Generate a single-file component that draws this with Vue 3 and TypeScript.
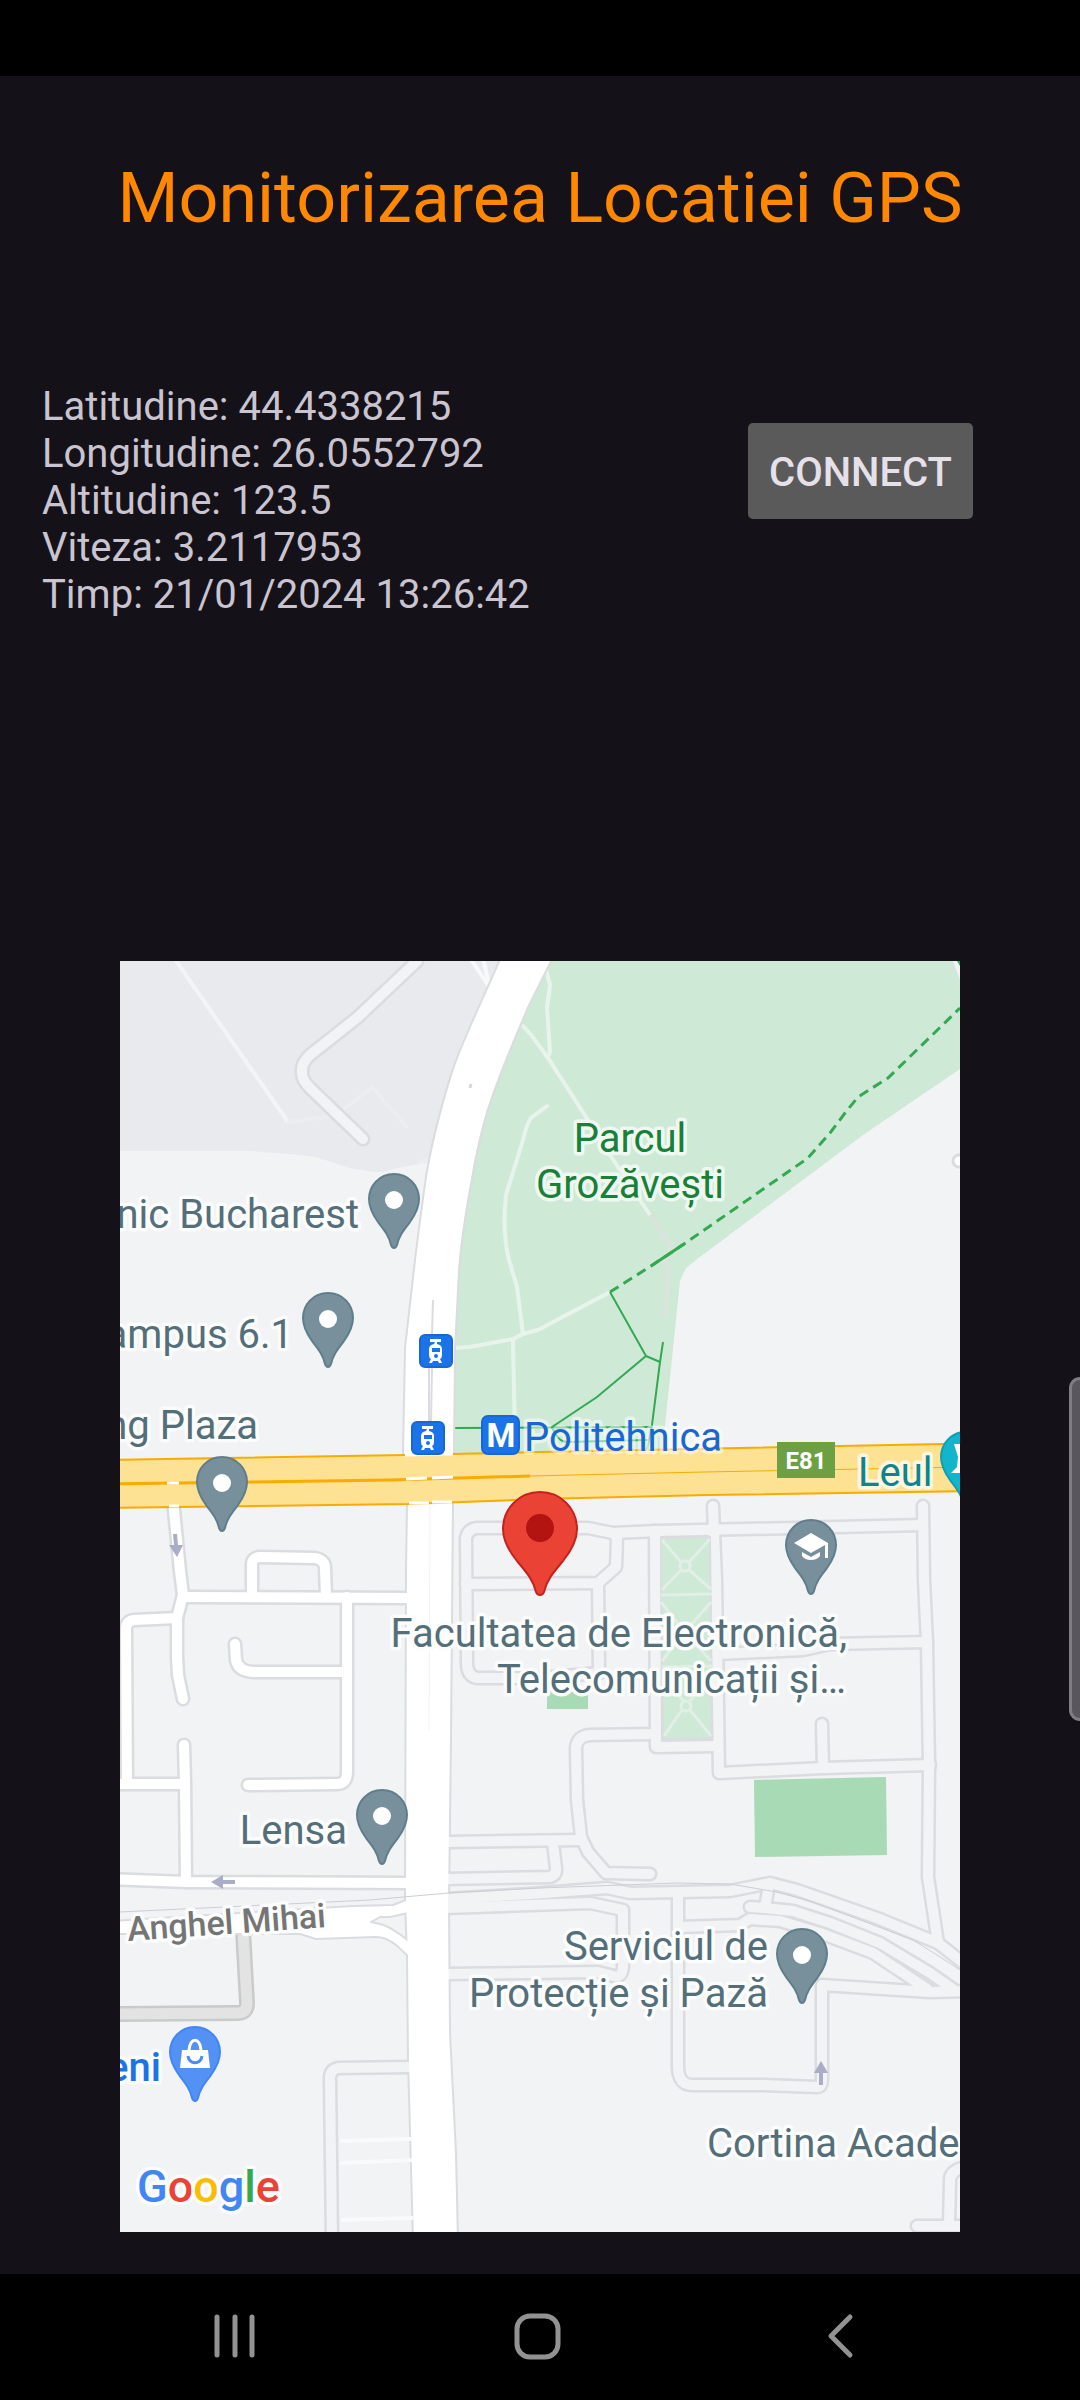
<script setup lang="ts">
interface Pin {
  x: number
  y: number
  kind: 'place' | 'school' | 'shop' | 'tower'
}

interface Label {
  text: string
  x: number
  y: number
  anchor: 'start' | 'middle' | 'end'
  tone: string
}

const readings: string[] = [
  'Latitudine: 44.4338215',
  'Longitudine: 26.0552792',
  'Altitudine: 123.5',
  'Viteza: 3.2117953',
  'Timp: 21/01/2024 13:26:42',
]

const minorRoads: string[] = [
  'M417 961 L358 1017 L310 1055 Q301 1063 302 1073 Q302 1080 310 1088 L363 1139',
  'M600 1673 L540 1678 H477 Q467 1676 467 1663 L466 1538 Q468 1529 477 1528 H588 L613 1533 L657 1531 L923 1525',
  'M466 1584 L598 1583 L616 1567 L617 1538 L613 1533',
  'M598 1583 L599 1670',
  'M655 1531 L656 1747 L717 1746',
  'M655 1734 L590 1735 Q577 1736 576 1748 L577 1800 L581 1837 L588 1852 L606 1873 L650 1874',
  'M713 1506 L716 1580 L718 1703 L719 1773 L823 1768 L930 1765',
  'M822 1724 L823 1768',
  'M923 1506 L924 1580 L927 1643 L929 1767 L928 1877 L933 1910 L938 1943',
  'M927 1642 L830 1644 L803 1650 L718 1654',
  'M446 1842 L580 1840',
  'M446 1879 L550 1877 Q557 1875 556 1868 L553 1843',
  'M446 1899 L530 1894 L607 1888 L630 1893 L730 1891 L770 1883 L797 1890 L877 1918 L938 1943 L966 1965',
  'M768 1890 L765 1908 L750 1907',
  'M765 1908 L793 1911 L830 1923 L880 1943 L930 1973 L953 1989',
  'M678 1927 L740 1925 L750 1919 L780 1921 L820 1933 L873 1953 L927 1989',
  'M678 1893 V2068 Q679 2085 692 2085 L763 2085 L817 2087 Q822 2087 822 2080 V1985 L930 1992 L966 1991',
  'M446 1908 L590 1903 L623 1910 V1967 Q622 1980 610 1975 L598 1972 L446 1974',
  'M412 2067 L338 2068 Q330 2070 330 2078 L332 2240',
  'M966 2167 Q949 2170 950 2182 L949 2225 M917 2226 H966',
]

const streets: string[] = [
  'M173 1500 L180 1571 L183 1595 L177 1618 V1657 L178 1675 L183 1699',
  'M183 1597 L412 1598',
  'M252 1597 V1565 Q252 1557 260 1557 L315 1558 Q325 1560 325 1568 L326 1597',
  'M177 1618 L134 1620 Q126 1621 126 1629 L127 1784',
  'M110 1784 L185 1784',
  'M184 1745 L185 1783 L186 1882',
  'M235 1644 L236 1660 Q238 1671 253 1672 L347 1672',
  'M347 1597 L347 1772 Q347 1784 337 1784 L248 1785',
  'M110 1879 L187 1882 L412 1883',
]

const boulevard =
  'M503 955 C478 1012 462 1045 453 1072 C442 1107 432 1146 427 1177 C423 1205 419 1236 416 1260 L406 1348 L404 1453 L408 1505 L407 1570 L406 1900 L408 1957 L409 2060 L414 2240 L457 2240 L455 2153 L449 2033 L448 1903 L450 1737 L452 1503 L453 1453 L454 1350 L458 1270 C461 1235 466 1205 472 1173 C477 1145 481 1130 486 1112 C498 1075 514 1038 528 1005 L553 955 Z'

const parkPaths: string[] = [
  'M523 1026 L532 1036 L548 1058 L588 1120 L610 1155 L650 1215',
  'M546 969 L550 985 L547 1008 L550 1052 L548 1057',
  'M547 1106 L531 1118 Q527 1123 523 1140 L506 1195 Q502 1232 509 1260 L517 1287 L523 1334',
  'M453 1348 L470 1347 L513 1339 L523 1334 L538 1330 L610 1292',
  'M513 1339 L515 1440',
]

const pins: Pin[] = [
  { x: 394, y: 1249, kind: 'place' },
  { x: 328, y: 1368, kind: 'place' },
  { x: 222, y: 1532, kind: 'place' },
  { x: 382, y: 1865, kind: 'place' },
  { x: 802, y: 2004, kind: 'place' },
  { x: 811, y: 1595, kind: 'school' },
  { x: 195, y: 2102, kind: 'shop' },
  { x: 966, y: 1507, kind: 'tower' },
]

const labels: Label[] = [
  { text: 'nic Bucharest', x: 359, y: 1228, anchor: 'end', tone: 'slate' },
  { text: 'ampus 6.1', x: 293, y: 1348, anchor: 'end', tone: 'slate' },
  { text: 'ng Plaza', x: 258, y: 1439, anchor: 'end', tone: 'slate' },
  { text: 'Facultatea de Electronică,', x: 847, y: 1647, anchor: 'end', tone: 'slate' },
  { text: 'Telecomunicații și…', x: 846, y: 1693, anchor: 'end', tone: 'slate' },
  { text: 'Lensa', x: 347, y: 1844, anchor: 'end', tone: 'slate' },
  { text: 'Serviciul de', x: 768, y: 1960, anchor: 'end', tone: 'slate' },
  { text: 'Protecție și Pază', x: 768, y: 2007, anchor: 'end', tone: 'slate' },
  { text: 'Cortina Acade', x: 707, y: 2157, anchor: 'start', tone: 'slate' },
  { text: 'Parcul', x: 630, y: 1152, anchor: 'middle', tone: 'park' },
  { text: 'Grozăvești', x: 630, y: 1198, anchor: 'middle', tone: 'park' },
  { text: 'Politehnica', x: 524, y: 1451, anchor: 'start', tone: 'transit' },
  { text: 'Leul', x: 858, y: 1486, anchor: 'start', tone: 'sight' },
  { text: 'eni', x: 161, y: 2081, anchor: 'end', tone: 'shopping' },
]

const tramStops = [
  { x: 419, y: 1334 },
  { x: 411, y: 1421 },
]
</script>

<template>
  <div class="screen">
    <div class="status-bar"></div>

    <main class="content">
      <h1 class="title">Monitorizarea Locatiei GPS</h1>

      <section class="info">
        <ul class="readings">
          <li v-for="line in readings" :key="line">{{ line }}</li>
        </ul>
        <button type="button" class="connect">CONNECT</button>
      </section>

      <svg class="map" viewBox="120 961 840 1271" role="img" aria-label="Map">
        <rect x="120" y="961" width="840" height="1271" fill="#f1f3f4" />
        <path
          d="M120 961 H550 L440 1160 L425 1163 Q400 1167 382 1172 Q370 1172 350 1168 L316 1157 Q305 1155 250 1151 H120 Z"
          fill="#e8eaed"
        />
        <g fill="none" stroke-linecap="round" stroke-linejoin="round" stroke-width="4">
          <path d="M174 958 L288 1122" stroke="#f3f4f6" />
          <path d="M288 1122 L328 1117 L340 1112 L372 1087 L406 1126 M420 1162 L432 1158" stroke="#ecedef" />
          <path d="M470 958 L488 985 M483 958 L489 985" stroke="#f8f9fa" />
        </g>

        <!-- Parks and lawns -->
        <path
          d="M540 961 H960 V1069 L910 1103 L863 1135 L696 1260 L686 1268 L680 1281 L662 1455 H445 L450 1270 L475 1130 Z"
          fill="#ceead6"
        />
        <path d="M547 1690 H588 V1709 H547 Z" fill="#a8dab5" />
        <path d="M754 1780 L886 1777 L887 1855 L755 1857 Z" fill="#a8dab5" />
        <g fill="none" stroke="#e8f4eb" stroke-width="4" stroke-linecap="round">
          <path v-for="d in parkPaths" :key="d" :d="d" />
        </g>
        <path
          d="M650 1215 L673 1248 L666 1260 M665 1260 L669 1268 L665 1317"
          fill="none"
          stroke="#dae4dd"
          stroke-width="4"
        />
        <g fill="none" stroke="#34a853" stroke-width="2">
          <path d="M610 1292 L646 1356 L597 1397 L552 1427 M646 1356 L660 1362 M663 1342 L660 1362 L652 1425 L647 1450" />
          <path d="M453 1428 L652 1427 M552 1427 Q558 1442 567 1442 L648 1440" />
          <path
            d="M610 1292 L651 1266 L684 1244 L808 1158 L830 1133 L845 1113 L858 1097 L888 1078 L960 1008"
            stroke-width="3"
            stroke-dasharray="10 6"
          />
          <path d="M651 1266 L684 1244" stroke-width="3" />
        </g>
        <path d="M953 961 L960 980 V961 Z" fill="#f1f3f4" />
        <path d="M957 961 H960 V966 Z" fill="#34a853" />
        <circle cx="959" cy="1161" r="6" fill="#fff" stroke="#dadce0" stroke-width="3" />

        <!-- Roads: outlines first, then surfaces -->
        <g fill="none" stroke-linejoin="round">
          <path :d="boulevard" stroke="#dadce0" stroke-width="4" />
          <g stroke="#dadce0" stroke-width="15" stroke-linecap="round">
            <path v-for="d in minorRoads" :key="d" :d="d" />
          </g>
          <g stroke="#f1f3f4" stroke-width="10" stroke-linecap="round">
            <path v-for="d in minorRoads" :key="d" :d="d" />
          </g>
          <path d="M243 1930 L247 2003 Q247 2013 238 2013 L110 2014" stroke="#c9caca" stroke-width="16" />
          <path d="M243 1930 L247 2003 Q247 2013 238 2013 L110 2014" stroke="#e3e3e3" stroke-width="11" />
          <g stroke="#dadce0" stroke-width="15" stroke-linecap="round">
            <path v-for="d in streets" :key="d" :d="d" />
          </g>
          <path
            d="M110 1921 L353 1906 L393 1905 L408 1899 V1913 L390 1917 L380 1917 L371 1922 L380 1924 Q390 1926 410 1942 V1958 L396 1945 Q386 1937 376 1937 L316 1939 L300 1934 L110 1934 Z"
            fill="#fff"
            stroke="#dadce0"
            stroke-width="2"
          />
          <g stroke="#fff" stroke-width="10" stroke-linecap="round">
            <path v-for="d in streets" :key="d" :d="d" />
          </g>
        </g>
        <path :d="boulevard" fill="#fff" />
        <path d="M471 1084 L470 1088" stroke="#d5d7e0" stroke-width="3" />
        <path d="M433 1300 L432 1334 M429 1368 V1421 M432 1368 L431 1421" fill="none" stroke="#dadce0" stroke-width="2" />
        <path d="M430 1505 L429 1730" stroke="#f1f2f3" stroke-width="1" />
        <path
          d="M120 1912 L370 1900 L448 1893 L540 1888 L677 1883 L730 1884 L777 1892 L813 1902 L913 1940 L937 1955 L960 1970"
          fill="none"
          stroke="#cdced6"
          stroke-width="1"
        />
        <path d="M340 2141 L411 2139 M340 2163 L412 2160 M341 2220 L413 2218" stroke="#f9fafb" stroke-width="4" />

        <!-- Garden between the faculty buildings -->
        <path d="M661 1538 L710 1537 L712 1738 L663 1739 Z" fill="#ceead6" stroke="#dadce0" stroke-width="2" />
        <g fill="none" stroke="#e1efe6" stroke-width="3">
          <path d="M662 1540 L681 1562 M689 1562 L710 1539 M681 1570 L662 1590 M689 1570 L711 1589 M661 1595 L712 1594" />
          <path d="M661 1602 L678 1624 M692 1624 L711 1602 M678 1640 L662 1661 M692 1640 L711 1661 M662 1667 L712 1666" />
          <path d="M663 1673 L683 1701 M690 1701 L711 1675 M682 1710 L664 1736 M690 1710 L711 1736" />
          <circle cx="685" cy="1566" r="5" />
          <circle cx="685" cy="1632" r="9" />
          <circle cx="686" cy="1706" r="5" />
        </g>

        <!-- E81 highway -->
        <path
          d="M110 1460 L406 1455 L540 1452 L943 1444 L970 1444 V1491 L707 1495 L540 1499 L408 1504 L110 1508 Z"
          fill="#fde293"
          stroke="#f9ab00"
          stroke-width="2"
        />
        <path d="M110 1484 L390 1480 L530 1476" fill="none" stroke="#f9ab00" stroke-width="3" />
        <path d="M530 1476 L704 1472 L970 1467" fill="none" stroke="#f9ab00" stroke-width="1" />
        <path
          d="M167 1483 H179 M406 1479 L427 1478 M432 1478 L453 1477 M405 1455 L453 1454 M409 1503 L429 1503 M432 1502 L452 1502"
          stroke="#fff"
          stroke-width="3"
        />
        <path d="M169 1506 H179" stroke="#fff" stroke-width="3" />

        <!-- One-way arrows -->
        <g fill="#a9adc8">
          <path d="M173 1534 H177 L178 1545 H183 L177 1557 L169 1545 H174 Z" />
          <path d="M211 1882 L223 1875 V1880 H235 V1884 H223 V1889 Z" />
          <path d="M821 2061 L828 2073 H823 V2085 H819 V2073 H814 Z" />
        </g>

        <!-- Route shield and transit badges -->
        <rect x="777" y="1442" width="58" height="36" fill="#6d9f43" />
        <text class="shield" x="806" y="1469" text-anchor="middle">E81</text>
        <g v-for="stop in tramStops" :key="stop.y" :transform="`translate(${stop.x} ${stop.y})`">
          <rect x="1" y="1" width="32" height="32" rx="5" fill="#1a73e8" stroke="#1967d2" stroke-width="2" />
          <path
            d="M11 5 H22 V8 H18 V10 Q23 11 23 15 V21 Q23 24 21 25 L23 29 H20 L19 27 H14 L13 29 H10 L12 25 Q10 24 10 21 V15 Q10 11 15 10 L16 8 H11 Z"
            fill="#fff"
          />
          <path d="M13 14 H21 V18 H13 Z" fill="#1a73e8" />
          <circle cx="17" cy="22" r="2" fill="#1a73e8" />
        </g>
        <rect x="482" y="1416" width="37" height="38" rx="6" fill="#1a73e8" stroke="#1967d2" stroke-width="2" />
        <text class="metro" x="501" y="1447" text-anchor="middle">M</text>

        <!-- Place pins -->
        <g v-for="pin in pins" :key="`${pin.x}-${pin.y}`" :transform="`translate(${pin.x} ${pin.y})`">
          <path
            :class="['pin', pin.kind]"
            d="M0 -75 C-15 -75 -25 -63 -25 -50 C-25 -41 -21 -34 -16 -27 C-9 -18 -5 -13 -3 -4 Q-2 -1 0 -1 Q2 -1 3 -4 C5 -13 9 -18 16 -27 C21 -34 25 -41 25 -50 C25 -63 15 -75 0 -75 Z"
          />
          <circle v-if="pin.kind === 'place'" cy="-49" r="9" fill="#fff" />
          <path
            v-else-if="pin.kind === 'school'"
            d="M0 -62 L17 -52 V-37 H14 V-50 L0 -42 L-17 -52 Z M-9 -43 L0 -38 L9 -43 V-39 Q6 -35 0 -35 Q-6 -35 -9 -39 Z"
            fill="#fff"
          />
          <g v-else-if="pin.kind === 'shop'">
            <path d="M-13 -52 H13 L15 -34 H-15 Z" fill="#fff" />
            <path d="M-6 -52 C-5 -65 5 -65 6 -52" fill="none" stroke="#fff" stroke-width="3" />
            <path d="M-7 -46 C-6 -37 6 -37 7 -46" fill="none" stroke="#4c8bf4" stroke-width="3" />
          </g>
          <path v-else d="M-12 -63 H12 V-59 L8 -53 L13 -34 H-15 L-9 -40 L-8 -50 Z" fill="#fff" />
        </g>

        <text
          v-for="label in labels"
          :key="label.text"
          :class="['label', label.tone]"
          :x="label.x"
          :y="label.y"
          :text-anchor="label.anchor"
        >{{ label.text }}</text>
        <text class="label street" transform="translate(128 1941) rotate(-4)">Anghel Mihai</text>

        <!-- Current location -->
        <g transform="translate(540 1596)">
          <path
            d="M0 -104 C-21 -104 -37 -87 -37 -67 C-37 -55 -31 -45 -23 -35 C-12 -22 -7 -16 -4 -4 Q-3 -1 0 -1 Q3 -1 4 -4 C7 -16 12 -22 23 -35 C31 -45 37 -55 37 -67 C37 -87 21 -104 0 -104 Z"
            fill="#ea4335"
            stroke="#c5221f"
            stroke-width="2"
          />
          <circle cy="-68" r="14" fill="#b31412" />
        </g>

        <text class="label brand" x="137" y="2202"><tspan fill="#4285f4">G</tspan><tspan fill="#ea4335">o</tspan><tspan fill="#fbbc04">o</tspan><tspan fill="#4285f4">g</tspan><tspan fill="#34a853">l</tspan><tspan fill="#ea4335">e</tspan></text>
      </svg>
    </main>

    <nav class="nav-bar">
      <button type="button" aria-label="Recents">
        <svg width="48" height="48" viewBox="0 0 48 48">
          <path d="M6 5 V43 M24 5 V43 M41 5 V43" />
        </svg>
      </button>
      <button type="button" aria-label="Home">
        <svg width="48" height="48" viewBox="0 0 48 48">
          <rect x="4" y="4" width="41" height="41" rx="13" />
        </svg>
      </button>
      <button type="button" aria-label="Back">
        <svg width="48" height="48" viewBox="0 0 48 48">
          <path d="M34 5 L15 24 L34 43" />
        </svg>
      </button>
    </nav>

    <div class="edge-handle"></div>
  </div>
</template>

<style>
body {
  margin: 0;
  background: #000;
}
</style>

<style scoped>
.screen {
  position: relative;
  display: flex;
  flex-direction: column;
  min-height: 100vh;
  overflow: hidden;
  background: #141218;
  font-family: Roboto, "Liberation Sans", sans-serif;
}

.status-bar {
  height: 76px;
  background: #000;
}

.content {
  flex: 1;
  padding: 81px 0 42px;
}

.title {
  margin: 0;
  color: #ff8800;
  font-size: 70px;
  font-weight: 400;
  line-height: 82px;
  text-align: center;
}

.info {
  display: flex;
  align-items: flex-start;
  justify-content: space-between;
  margin-top: 144px;
  padding: 0 107px 0 42px;
}

.readings {
  margin: 0;
  padding: 0;
  list-style: none;
  color: #cac4d0;
  font-size: 40px;
  line-height: 47px;
}

.connect {
  margin: 40px 0 0;
  padding: 3px 21px 0;
  height: 96px;
  border: 0;
  border-radius: 5px;
  background: #5a5a5b;
  color: #e6e0e9;
  font-family: inherit;
  font-size: 40px;
  font-weight: 500;
}

.map {
  display: block;
  width: calc(100% - 240px);
  height: auto;
  margin: 343px auto 0;
  overflow: hidden;
}

.label {
  font-size: 40px;
  paint-order: stroke;
  stroke: #fbfcfc;
  stroke-width: 7px;
  stroke-linejoin: round;
}

.slate {
  fill: #546e7a;
}

.park {
  fill: #188038;
  stroke: #eef8f1;
}

.transit {
  fill: #1967d2;
  stroke: rgba(255, 255, 255, 0.5);
}

.sight {
  fill: #0c8591;
  stroke: #fef6de;
}

.shopping {
  fill: #1a73e8;
  font-weight: 500;
}

.street {
  fill: #757575;
  font-size: 34px;
  font-weight: 500;
}

.brand {
  font-size: 45px;
  font-weight: 500;
}

.shield {
  fill: #fff;
  font-size: 24px;
  font-weight: 700;
}

.metro {
  fill: #fff;
  font-size: 33px;
  font-weight: 700;
}

.pin {
  fill: #78909c;
  stroke: #607d8b;
  stroke-width: 2px;
}

.pin.shop {
  fill: #5491f5;
  stroke: #4285f4;
}

.pin.tower {
  fill: #12b5cb;
  stroke: #129eaf;
}

.nav-bar {
  display: grid;
  grid-template-columns: repeat(3, 1fr);
  box-sizing: border-box;
  height: 126px;
  padding: 0 89px 3px 84px;
  background: #000;
}

.nav-bar button {
  display: flex;
  align-items: center;
  justify-content: center;
  padding: 0;
  border: 0;
  background: none;
}

.nav-bar svg {
  fill: none;
  stroke: #929292;
  stroke-width: 5px;
  stroke-linecap: round;
  stroke-linejoin: round;
}

.edge-handle {
  position: absolute;
  top: 1377px;
  right: 0;
  box-sizing: border-box;
  width: 11px;
  height: 344px;
  border: 3px solid #807e84;
  border-right: 0;
  border-radius: 12px 0 0 12px;
  background: #59575d;
}
</style>
